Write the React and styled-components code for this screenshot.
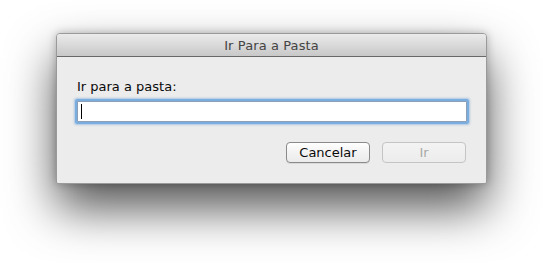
import React from "react";
import styled, { createGlobalStyle } from "styled-components";

const Global = createGlobalStyle`
  html, body { margin: 0; padding: 0; background: #ffffff; }
  body { font-family: "DejaVu Sans", "Liberation Sans", sans-serif; }
`;

const Stage = styled.div`
  width: 543px;
  height: 263px;
  padding: 33px 0 0 56px;
  box-sizing: border-box;
  overflow: hidden;
`;

const Window = styled.div`
  width: 431px;
  height: 151px;
  box-sizing: border-box;
  border: 1px solid #9a9a9a;
  border-radius: 4px 4px 2px 2px;
  background: #ececec;
  display: flex;
  flex-direction: column;
  box-shadow: 0 24px 48px rgba(0, 0, 0, 0.68), 0 0 8px rgba(0, 0, 0, 0.25);
  overflow: hidden;
`;

const TitleBar = styled.div`
  height: 23px;
  flex: none;
  box-sizing: border-box;
  border-bottom: 1px solid #696969;
  background: linear-gradient(#ebebeb, #d6d6d6 60%, #c8c8c8);
  display: flex;
  align-items: center;
  justify-content: center;
  font-size: 13px;
  color: #444;
  letter-spacing: 0.1px;
`;

const Body = styled.div`
  flex: 1;
  display: flex;
  flex-direction: column;
  padding: 22px 19px 0 20px;
`;

const Label = styled.div`
  font-size: 13px;
  color: #0a0a0a;
  line-height: 16px;
`;

const Field = styled.div`
  margin-top: 6px;
  height: 21px;
  box-sizing: border-box;
  border: 1px solid #8d9fb5;
  background: #fff;
  box-shadow: 0 0 0 2px #7aaee0, 0 0 2px 3px rgba(110, 160, 215, 0.5);
  border-radius: 1px;
  display: flex;
  align-items: center;
  padding-left: 3px;
`;

const Caret = styled.div`
  width: 1px;
  height: 15px;
  background: #000;
`;

const Buttons = styled.div`
  margin-top: 20px;
  display: flex;
  justify-content: flex-end;
  gap: 12px;
  padding-right: 1px;
`;

const Button = styled.div`
  width: 84px;
  height: 21px;
  box-sizing: border-box;
  border-radius: 4px;
  border: 1px solid ${(p) => (p.$disabled ? "#c4c4c4" : "#8a8a8a")};
  background: ${(p) =>
    p.$disabled
      ? "linear-gradient(#f3f3f3, #ececec)"
      : "linear-gradient(#ffffff, #f3f3f3 50%, #ebebeb)"};
  box-shadow: ${(p) => (p.$disabled ? "none" : "0 1px 0 rgba(0,0,0,0.08)")};
  display: flex;
  align-items: center;
  justify-content: center;
  font-size: 13px;
  color: ${(p) => (p.$disabled ? "#a8a8a8" : "#0a0a0a")};
`;

export default function App() {
  return (
    <Stage>
      <Global />
      <Window>
        <TitleBar>Ir Para a Pasta</TitleBar>
        <Body>
          <Label>Ir para a pasta:</Label>
          <Field>
            <Caret />
          </Field>
          <Buttons>
            <Button>Cancelar</Button>
            <Button $disabled>Ir</Button>
          </Buttons>
        </Body>
      </Window>
    </Stage>
  );
}
